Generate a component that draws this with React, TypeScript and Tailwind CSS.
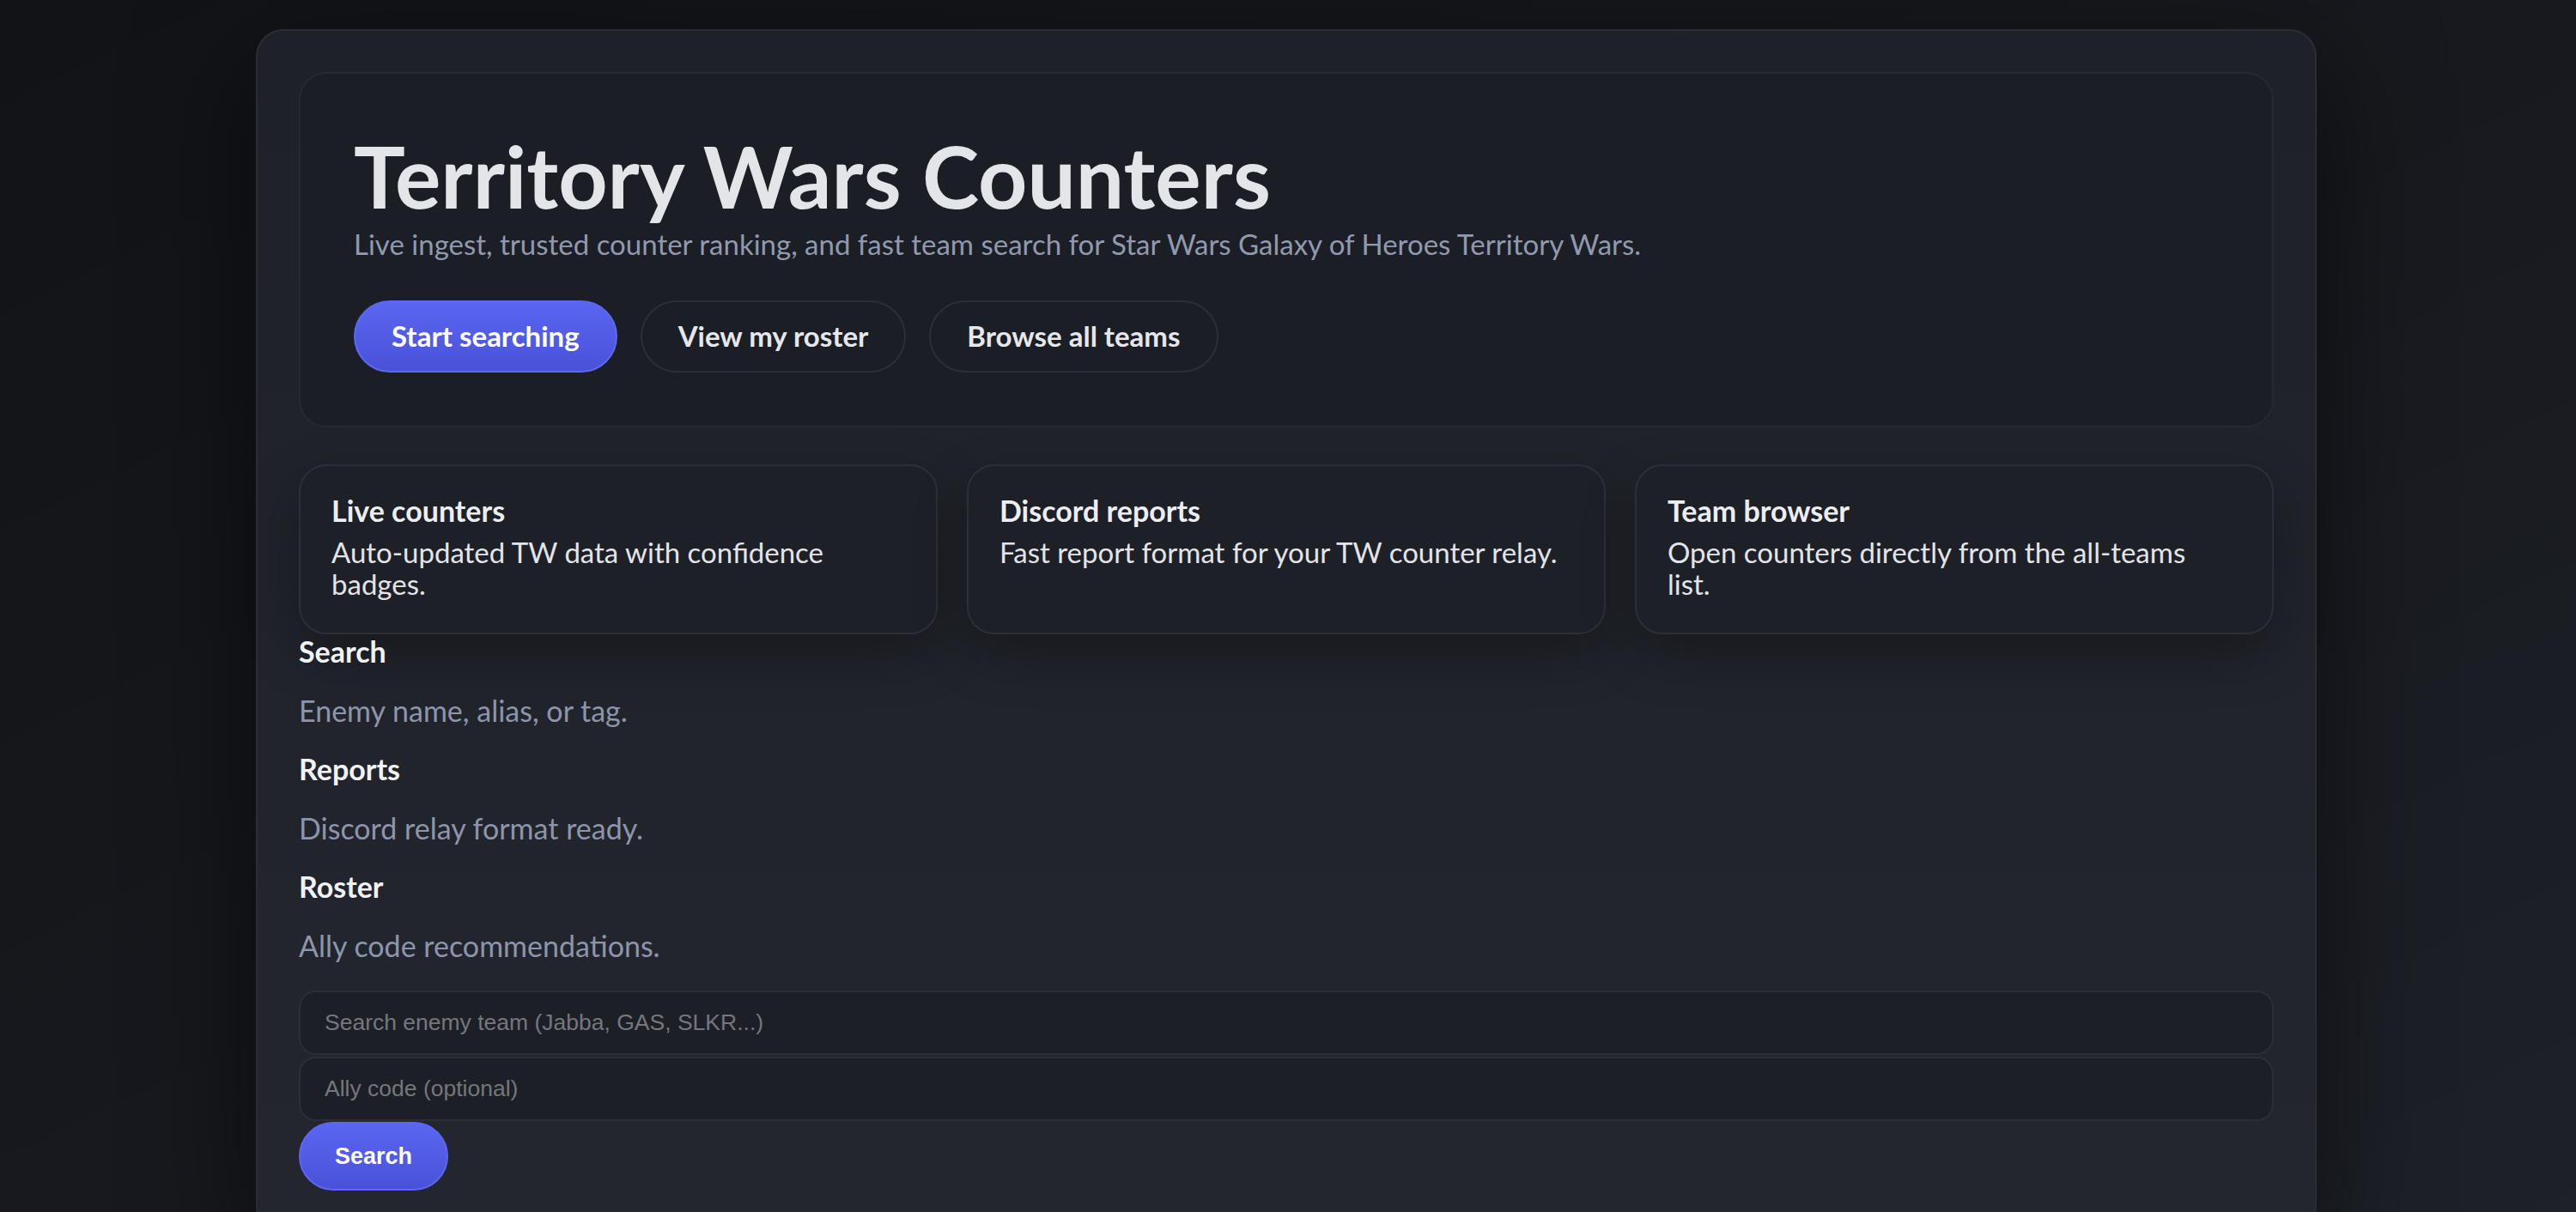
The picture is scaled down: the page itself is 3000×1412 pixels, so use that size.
import React, {useState} from 'react';

const features = [
  {title: 'Live counters', text: 'Auto-updated TW data with confidence badges.'},
  {title: 'Discord reports', text: 'Fast report format for your TW counter relay.'},
  {title: 'Team browser', text: 'Open counters directly from the all-teams list.'},
];

const hints = [
  {label: 'Search', text: 'Enemy name, alias, or tag.'},
  {label: 'Reports', text: 'Discord relay format ready.'},
  {label: 'Roster', text: 'Ally code recommendations.'},
];

const App = () => {
  const [query, setQuery] = useState<string>('');
  const [allyCode, setAllyCode] = useState<string>('');

  return (
    <div className="min-h-screen bg-gradient-to-br from-[#121317] via-[#17191e] to-[#1e2129] pt-[34px] pb-[40px] font-['Lato','Noto_Sans',sans-serif]">
      <div className="mx-auto w-[2400px] -translate-x-[2px] rounded-[32px] border-2 border-[#2a2d35] bg-gradient-to-b from-[#1f2128] to-[#23262e] p-[48px] shadow-[0_40px_140px_rgba(0,0,0,0.55)]">

        <section className="rounded-[32px] border-2 border-[#262930] bg-[#1c1e25] px-[62px] pt-[68px] pb-[62px]">
          <h1 className="text-[100px] font-bold leading-[101px] text-[#e4e5e9]">Territory Wars Counters</h1>
          <p className="mt-[5px] text-[33px] leading-[48px] text-[#9199ae]">
            Live ingest, trusted counter ranking, and fast team search for Star Wars Galaxy of Heroes Territory Wars.
          </p>
          <div className="mt-[42px] flex gap-[27px]">
            <button className="h-[84px] rounded-full border-2 border-[#5d68f2] bg-gradient-to-b from-[#5a66f1] to-[#4a51d8] px-[42px] text-[33px] font-bold text-white">
              Start searching
            </button>
            <button className="h-[84px] rounded-full border-2 border-[#2c2f37] px-[42px] text-[33px] font-bold text-[#e6e7eb]">
              View my roster
            </button>
            <button className="h-[84px] rounded-full border-2 border-[#2c2f37] px-[42px] text-[33px] font-bold text-[#e6e7eb]">
              Browse all teams
            </button>
          </div>
        </section>

        <div className="mt-[43px] grid grid-cols-3 gap-[34px]">
          {features.map((f) => (
            <div key={f.title}
                 className="h-[198px] rounded-[32px] border-2 border-[#2c2f38] bg-[#1e2027] pl-[36px] pr-[48px] pt-[33px] shadow-[0_24px_60px_rgba(0,0,0,0.28)]">
              <h3 className="text-[34px] font-bold leading-[38px] text-[#eceef1]">{f.title}</h3>
              <p className="mt-[11px] text-[33px] leading-[37px] text-[#e3e4e8]">{f.text}</p>
            </div>
          ))}
        </div>

        <div className="mt-[2px] flex flex-col gap-[32px]">
          {hints.map((h) => (
            <React.Fragment key={h.label}>
              <h4 className="text-[34px] font-bold leading-[36.5px] text-[#f1f2f4]">{h.label}</h4>
              <p className="text-[34px] leading-[36.5px] text-[#8d95ab]">{h.text}</p>
            </React.Fragment>
          ))}
        </div>

        <form className="mt-[34px] flex flex-col" onSubmit={e => e.preventDefault()}>
          <input type="text"
                 value={query}
                 onChange={e => setQuery(e.currentTarget.value)}
                 placeholder="Search enemy team (Jabba, GAS, SLKR...)"
                 className="mb-[2px] h-[75px] rounded-[20px] border-2 border-[#2b2e36] bg-[#1d1f26] px-[28px] font-['Liberation_Sans',Arial,sans-serif] text-[26.5px] text-[#e5e7eb] outline-none placeholder:text-[#75777d]"/>
          <input type="text"
                 value={allyCode}
                 onChange={e => setAllyCode(e.currentTarget.value)}
                 placeholder="Ally code (optional)"
                 className="h-[75px] rounded-[20px] border-2 border-[#2b2e36] bg-[#1d1f26] px-[28px] font-['Liberation_Sans',Arial,sans-serif] text-[26.5px] text-[#e5e7eb] outline-none placeholder:text-[#75777d]"/>
          <button type="submit"
                  className="mt-[1px] h-[80px] self-start rounded-full border-2 border-[#5d68f2] bg-gradient-to-b from-[#5a66f1] to-[#4a51d8] px-[40px] font-['Liberation_Sans',Arial,sans-serif] text-[27px] font-bold text-white">
            Search
          </button>
        </form>

      </div>
    </div>
  );
};

export default App;
